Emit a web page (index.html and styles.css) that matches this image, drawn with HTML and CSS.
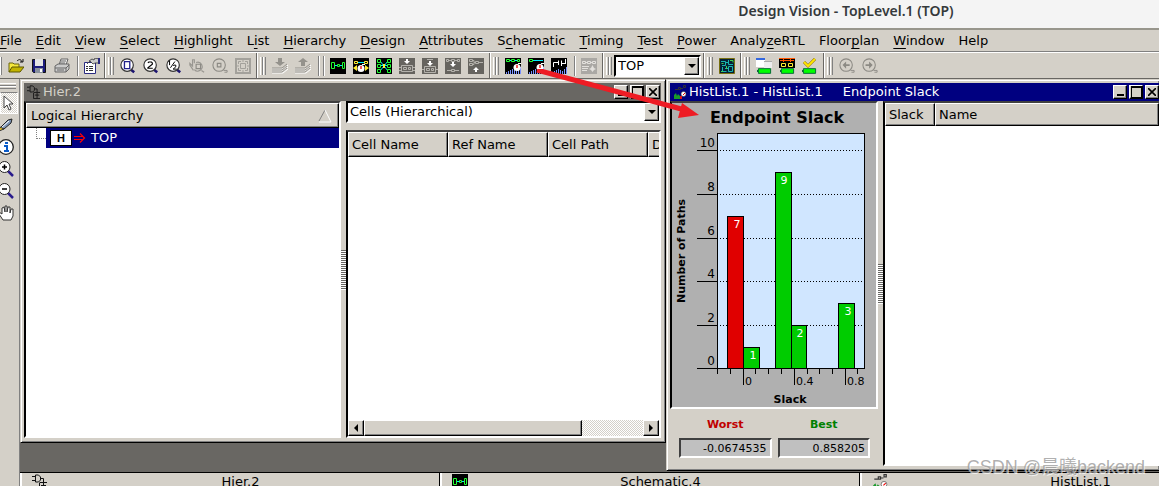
FILE: index.html
```html
<!DOCTYPE html>
<html lang="en">
<head>
<meta charset="utf-8">
<title>Design Vision - TopLevel.1 (TOP)</title>
<link rel="stylesheet" href="styles.css">
</head>
<body>
<svg class="defs" aria-hidden="true">
  <symbol id="lens" viewBox="0 0 18 18"><path d="M12 13l4 3" stroke="#1c1470" stroke-width="3"/><circle cx="8" cy="8" r="7" fill="#fff" stroke="#333" stroke-width="1.3"/></symbol>
  <symbol id="lens-off" viewBox="0 0 18 18"><path d="M13 14h4v2h-3" stroke="#8c8a84" fill="none"/><circle cx="8" cy="8" r="7" fill="none" stroke="#8c8a84" stroke-width="1.2"/></symbol>
  <symbol id="gate" viewBox="0 0 16 16"><path d="M0 2.500h3M0 6.500h3M3.500 1v7h3l2-2V3l-2-2h-3M9 4.500h2.500V8M7.500 9v6.500H15M7.500 8.500H15M9 11.500h5M11.500 9v6" fill="none" stroke="#111"/></symbol>
  <symbol id="chip" viewBox="0 0 16 16"><path fill="#000" d="M0 0h16v16H0z"/><path d="M5 7.500h2M9 7.500h3" stroke="#0ef"/><path d="M1.500 4.500h3v6h-3zM12.500 4.500h2v6h-2zM7.500 6.500h2v2h-2z" fill="none" stroke="#2f3"/></symbol>
  <symbol id="watch" viewBox="0 0 8 8"><circle cx="4" cy="4.500" r="3.500" fill="#fff"/><path d="M4 5V2" stroke="#e00" stroke-width="1.300"/><path d="M5 .500h3" stroke="#fff"/></symbol>
  <symbol id="bars" viewBox="0 0 16 7"><path d="M1.500 7V5M3.500 7V4M5.500 7V3M7.500 7V2M9.500 7V3M11.500 7V4M13.500 7V2M15.500 7V0" stroke="#7890ff"/></symbol>
  <symbol id="dark-box" viewBox="0 0 16 16"><path fill="#66645f" d="M0 0h16v16H0z"/></symbol>
  <symbol id="pill" viewBox="0 0 16 6"><path d="M1.500 .500h13v5h-13z" fill="#0f0" stroke="#063"/><path d="M0 2h1v2H0z" fill="#063"/></symbol>
  <symbol id="mini-hist" viewBox="0 0 14 14"><path d="M2 4.500h3M5.500 2.500h2v2h-2zM8 3.500h2M10.500 .500h2v2h-2z" fill="none" stroke="#333"/><path d="M1 14v-4l2-2 1 3 1-2 2 2v3z" fill="#1a9b2b"/><path d="M7 14v-3h2v3" fill="#d11"/><circle cx="10.500" cy="9" r="2.500" fill="#fff" stroke="#333" stroke-width=".5"/><path d="M10 10l2-2" stroke="#e00"/></symbol>
</svg>

<header class="titlebar"><h1>Design Vision - TopLevel.1 (TOP)</h1></header>

<nav class="menubar">
  <button><u>F</u>ile</button><button><u>E</u>dit</button><button><u>V</u>iew</button><button><u>S</u>elect</button><button><u>H</u>ighlight</button><button>L<u>i</u>st</button><button><u>H</u>ierarchy</button><button><u>D</u>esign</button><button><u>A</u>ttributes</button><button>S<u>c</u>hematic</button><button><u>T</u>iming</button><button><u>T</u>est</button><button><u>P</u>ower</button><button>Analy<u>z</u>eRTL</button><button>Floor<u>p</u>lan</button><button><u>W</u>indow</button><button>Help</button>
</nav>

<div class="toolbars">
  <div class="group group-first">
    <span class="grip"></span>
    <button class="tool" aria-label="Open"><svg viewBox="0 0 16 16"><path d="M1 14V5h4l1 1h5v3" fill="#f5e83c" stroke="#6b6410"/><path d="M1 14l3-5h12l-4 5z" fill="#c2b400" stroke="#5c5600"/><path d="M9 3c2-2 4-2 5 1M12 4h3V1" fill="none" stroke="#111"/></svg></button>
    <button class="tool" aria-label="Save"><svg viewBox="0 0 16 16"><path d="M1.500 1.500h13v13h-12l-1-1z" fill="#1c1c7c" stroke="#111"/><path d="M4 1h8v7H4z" fill="#e4e4e4"/><path d="M4 10h8v5H4z" fill="#88909c"/><path d="M9 11h2v3H9z" fill="#fff"/></svg></button>
    <button class="tool" aria-label="Print"><svg viewBox="0 0 16 16"><path d="M5 7l2-6h7l-2 6" fill="#eee" stroke="#666"/><path d="M1 8l3-2h11v5l-3 3H1z" fill="#ccc" stroke="#666"/><path d="M1 10h11l3-3M12 10v4M7 3h5M6 5h5M3 12h7" stroke="#666" fill="none"/></svg></button>
    <span class="sep"></span>
    <button class="tool" aria-label="Properties"><svg viewBox="0 0 16 16"><path d="M.500 4.500h11v11H.500z" fill="#fff" stroke="#2a2a80"/><path d="M3 6l3-3 3 3 2-1h4V1l-4-1-1 2-2-1-3 2" fill="#ccc" stroke="#333" stroke-width=".8"/><path d="M2 8.500h2M5 8.500h4M2 10.500h2M5 10.500h4M2 12.500h2M5 12.500h4" stroke="#333"/><path d="M14 0h2v6h-2z" fill="#2a2a80"/></svg></button>
  </div>
  <div class="group">
    <span class="grip"></span>
    <button class="tool" aria-label="Zoom fit"><svg viewBox="0 0 18 18"><use href="#lens"/><path d="M5 4h6v8H5z" fill="#fff" stroke="#22228c" stroke-width="1.500"/></svg></button>
    <button class="tool" aria-label="Zoom 2x"><svg viewBox="0 0 18 18"><use href="#lens"/><path d="M5.500 5.500l1-1h3l1 1v1.500l-5 4v.500h5.500" fill="none" stroke="#000" stroke-width="1.300"/></svg></button>
    <button class="tool" aria-label="Zoom half"><svg viewBox="0 0 18 18"><use href="#lens"/><path d="M3 4l1-1v5M5 11l5-7M8 9l1-1h2v2l-3 2.500h4" fill="none" stroke="#000" stroke-width="1.100"/></svg></button>
    <button class="tool" aria-label="Pan" disabled><svg viewBox="0 0 18 18"><path d="M5 14L1 8V6l3 3V2h2v4M8 5a5 5 0 1 1-2 8M14 14l3 2" fill="none" stroke="#989690" stroke-width="1.300"/><path d="M8 7h5v5H8z" fill="none" stroke="#8c8a84" stroke-width="1.300"/></svg></button>
    <button class="tool" aria-label="Zoom selection" disabled><svg viewBox="0 0 18 18"><use href="#lens-off"/><path d="M6 6h4v4H6z" fill="none" stroke="#8c8a84" stroke-width="1.300"/></svg></button>
    <button class="tool" aria-label="Full view" disabled><svg viewBox="0 0 16 16"><path d="M1 1h14v14H1z" fill="none" stroke="#a3a19b" stroke-width="2"/><path d="M3.500 6V3.500H6M10 3.500h2.500V6M3.500 10v2.500H6M10 12.500h2.500V10M5.500 5.500h5v5h-5zM8 2v2M8 12v2M2 8h2M12 8h2" fill="none" stroke="#a3a19b"/></svg></button>
  </div>
  <div class="group">
    <span class="grip"></span>
    <button class="tool" aria-label="Push" disabled><svg viewBox="0 0 16 16"><path d="M6 0h4v4h3l-5 4-5-4h3z" fill="#94928c"/><path d="M0 11h11l5-4M0 13h11l5-4M0 15h11l5-4" fill="none" stroke="#fff"/><path d="M0 10h10l5-4M0 12h10l5-4M0 14h10l5-4" fill="none" stroke="#94928c"/></svg></button>
    <button class="tool" aria-label="Pop" disabled><svg viewBox="0 0 16 16"><path d="M6 8h4V4h3L8 0 3 4h3z" fill="#94928c"/><path d="M0 11h11l5-4M0 13h11l5-4M0 15h11l5-4" fill="none" stroke="#fff"/><path d="M0 10h10l5-4M0 12h10l5-4M0 14h10l5-4" fill="none" stroke="#94928c"/></svg></button>
    <span class="sep sep-double"></span>
    <button class="tool" aria-label="Schematic"><svg viewBox="0 0 16 16"><use href="#chip"/></svg></button>
    <button class="tool" aria-label="Timing path"><svg viewBox="0 0 16 16"><path d="M0 0h16v16H0z"/><path d="M4 4.500h8" stroke="#0ef"/><path d="M1.500 3.500h3v2h-3zM11.500 3.500h3v2h-3z" fill="none" stroke="#fe3"/><path d="M4 7v6l-4-3zM12 7v6l4-3z" fill="#fe3"/><use href="#watch" x="4" y="6" width="8" height="8"/></svg></button>
    <button class="tool" aria-label="Fan view"><svg viewBox="0 0 16 16"><path d="M0 0h16v16H0z"/><path d="M4 3l4 5-4 5M12 3L8 8l4 5M4 7.500h8" fill="none" stroke="#0ef"/><path d="M1.500 1.500h3v3h-3zM1.500 6.500h3v3h-3zM1.500 11.500h3v3h-3zM11.500 1.500h3v3h-3zM11.500 6.500h3v3h-3zM11.500 11.500h3v3h-3z" fill="none" stroke="#2f3"/><path d="M7 6h2v4H7z" fill="#fe3"/></svg></button>
    <button class="tool" aria-label="Add fan-in" disabled><svg viewBox="0 0 16 16"><use href="#dark-box"/><path d="M2.500 7.500h11v6h-11zM4.500 9.500h3v2h-3zM9.500 9.500h2v2h-2zM0 9.500h2M0 12.500h2M14 9.500h2M14 12.500h2" fill="none" stroke="#b4b2ac"/><path d="M7 1h2v2h2L8 6 5 3h2z" fill="#fff"/></svg></button>
    <button class="tool" aria-label="Add fan-out" disabled><svg viewBox="0 0 16 16"><use href="#dark-box"/><path d="M5 1.500h6M2.500 8.500h11v6h-11zM4.500 10.500h3v2h-3zM9.500 10.500h2v2h-2zM0 11.500h2M14 11.500h2" fill="none" stroke="#b4b2ac"/><path d="M7 3h2v2h2L8 8 5 5h2z" fill="#fff"/></svg></button>
    <button class="tool" aria-label="Add path" disabled><svg viewBox="0 0 16 16"><use href="#dark-box"/><path d="M1.500 1.500h2v2h-2zM6.500 1.500h3v2h-3zM12.500 1.500h2v2h-2zM4 2.500h2M10 2.500h2M2 12.500h4M10 12.500h4M6.500 11.500h3v2h-3z" fill="none" stroke="#b4b2ac"/><path d="M7 4h2v2h2L8 9 5 6h2z" fill="#fff"/></svg></button>
    <button class="tool" aria-label="Remove path" disabled><svg viewBox="0 0 16 16"><use href="#dark-box"/><path d="M1.500 1.500h3v2h-3zM1.500 5.500h3v2h-3zM7.500 3.500h3v2h-3zM11 4.500h4M5 2.500h1v2h1M5 6.500h1v-2" fill="none" stroke="#b4b2ac"/><path d="M7 14h2v-2h2L8 9l-3 3h2z" fill="#fff"/></svg></button>
  </div>
  <div class="group">
    <span class="grip"></span>
    <button class="tool" aria-label="Path slack histogram"><svg viewBox="0 0 16 16"><path d="M0 0h16v16H0z"/><path d="M4 2.500h8" stroke="#0ef"/><path d="M1.500 1.500h3v2h-3zM6.500 1.500h3v2h-3zM12.500 1.500h2v2h-2z" stroke="#2f3"/><use href="#bars" y="9" width="16" height="7"/><use href="#watch" x="8" y="5" width="8" height="8"/></svg></button>
    <button class="tool" aria-label="Endpoint slack histogram"><svg viewBox="0 0 16 16"><path d="M0 0h16v16H0z"/><path d="M4 2.500h11" stroke="#0ef"/><path d="M1.500 1.500h3v2h-3z" stroke="#2f3"/><use href="#bars" y="9" width="16" height="7"/><use href="#watch" x="8" y="5" width="8" height="8"/></svg></button>
    <button class="tool" aria-label="Net capacitance histogram"><svg viewBox="0 0 16 16"><path d="M0 0h16v16H0z"/><use href="#bars" y="9" width="16" height="7"/><path d="M2.500 9V4.500h5M7.500 7V2.500M10.500 8V2.500M10.500 5.500h4M14.500 1v5" fill="none" stroke="#fff"/></svg></button>
    <span class="sep"></span>
    <button class="tool" aria-label="Path inspector" disabled><svg viewBox="0 0 16 16"><path fill="#aaa8a4" d="M0 0h16v16H0z"/><path d="M1.500 3.500h3v2h-3zM6.500 3.500h3v2h-3zM11.500 3.500h3v2h-3zM5 4.500h1M10 4.500h1M1 8.500h7M1 10.500h6M1 12.500h5" fill="none" stroke="#e2e0dc"/><path d="M11.500 7l1.500 3 2 1-2 1-1.500 2-1.500-2-2-1 2-1z" fill="#e2e0dc"/></svg></button>
  </div>
  <div class="group">
    <span class="grip"></span>
    <div class="combo combo-design"><select aria-label="Current design"><option>TOP</option></select><span class="drop"></span></div>
  </div>
  <div class="group">
    <span class="grip"></span>
    <button class="tool" aria-label="Layout view"><svg viewBox="0 0 16 16"><path d="M.500.500h15v15H.500z" fill="#052036" stroke="#776f10"/><path d="M2 3.500h4.500v4H3M9.500 2v4.500H14M9.500 8.500h4v5h-4zM3.500 9v4.500h4M7 4.500h2M6 10.500h3" fill="none" stroke="#18b5b0"/><path d="M2 13.500h2M11 2.500h3v2M2.500 5.500h2M7.500 8v3" fill="none" stroke="#3fd050"/></svg></button>
  </div>
  <div class="group">
    <span class="grip"></span>
    <button class="tool" aria-label="New report"><svg viewBox="0 0 16 16"><path d="M0 0h9v9H0z" fill="#fff"/><path d="M0 0h9v2H0z" fill="#3468e0"/><path d="M8 3h8v7H8z" fill="#eee"/><path d="M8 3.500h8" stroke="#aaa"/><use href="#pill" x="1" y="10" width="15" height="6"/></svg></button>
    <button class="tool" aria-label="Report paths"><svg viewBox="0 0 16 16"><path d="M0 0h16v10H0z"/><path d="M0 .500h16M1 2.500h14M4.500 0v4M11.500 0v4" stroke="#f50"/><path d="M2.500 5.500h4v3h-4zM9.500 5.500h4v3h-4z" fill="none" stroke="#fe3"/><use href="#pill" x="1" y="10" width="15" height="6"/></svg></button>
    <button class="tool" aria-label="Check design"><svg viewBox="0 0 16 16"><path d="M2 4l4 4 7-7" fill="none" stroke="#876c00" stroke-width="3"/><path d="M2 4l4 4 7-7" fill="none" stroke="#ffe600" stroke-width="2"/><use href="#pill" x="0" y="10" width="15" height="6"/></svg></button>
  </div>
  <div class="group group-last">
    <span class="grip"></span>
    <button class="tool" aria-label="Back" disabled><svg viewBox="0 0 18 18"><use href="#lens-off"/><path d="M4 8l4-4v3h4v2H8v3z" fill="#8c8a84"/></svg></button>
    <button class="tool" aria-label="Forward" disabled><svg viewBox="0 0 18 18"><use href="#lens-off"/><path d="M12 8L8 4v3H4v2h4v3z" fill="#8c8a84"/></svg></button>
  </div>
</div>

<div class="main">
  <aside class="palette">
    <span class="grip-h"></span>
    <button class="pick pressed" aria-label="Select"><svg viewBox="0 0 16 16"><path d="M5 1v12l3-3 2 5 2-1-2-5h4z" fill="#fff" stroke="#444"/></svg></button>
    <button class="pick" aria-label="Highlight"><svg viewBox="0 0 16 16"><path d="M2 11l8-8 4-1-1 4-7 6z" fill="#7e96b8" stroke="#222"/><path d="M3 11l8-7" stroke="#fff"/><path d="M1 14l1-4 4 2z" fill="#edc520" stroke="#333"/></svg></button>
    <button class="pick" aria-label="Info"><svg viewBox="0 0 16 16"><circle cx="8" cy="8" r="7.300" fill="#fff" stroke="#222" stroke-width="1.300"/><path d="M6 7h3v5M6 12h5" fill="none" stroke="#0a5bc8" stroke-width="2"/><path d="M7 3h3v2H7z" fill="#0a5bc8"/></svg></button>
    <button class="pick" aria-label="Zoom in"><svg viewBox="0 0 16 16"><path d="M10 10l5 5" stroke="#2a1c8c" stroke-width="2.500"/><circle cx="6.500" cy="6" r="5.500" fill="#fff" stroke="#222"/><path d="M4 6h5M6.500 3.500v5" stroke="#000" stroke-width="1.500"/></svg></button>
    <button class="pick" aria-label="Zoom out"><svg viewBox="0 0 16 16"><path d="M10 10l5 5" stroke="#2a1c8c" stroke-width="2.500"/><circle cx="6.500" cy="6" r="5.500" fill="#fff" stroke="#222"/><path d="M4 6h5" stroke="#000" stroke-width="1.500"/></svg></button>
    <button class="pick" aria-label="Pan"><svg viewBox="0 0 16 16"><path d="M5 15l-4-6V7l3 2V3l2-1 1 5V1h2v6l1-5h2v6l1-4h2v7l-2 4z" fill="#fff" stroke="#333"/></svg></button>
  </aside>

  <div class="workspace">
    <div class="desktop">
      <section class="window hier">
        <header class="caption"><svg class="cap-icon" viewBox="0 0 16 16"><use href="#gate"/></svg><h2>Hier.2</h2>
          <button class="win min" aria-label="Minimize"></button><button class="win max" aria-label="Maximize"></button><button class="win close" aria-label="Close"><svg viewBox="0 0 8 8"><path d="M0 0l8 8M8 0L0 8" stroke="#000" stroke-width="1.600"/></svg></button></header>
        <div class="split">
          <div class="sunken tree">
            <button class="head tree-head">Logical Hierarchy<svg viewBox="0 0 14 14"><path d="M7 1L1 12" stroke="#808080"/><path d="M7 1l6 12H1" fill="none" stroke="#fff"/></svg></button>
            <ul><li><span class="branch"></span><span class="node"><b>H</b><svg viewBox="0 0 12 12"><path d="M0 4.500h9M0 7.500h9M6 1.500L10.500 6 6 10.500" fill="none" stroke="#f00" stroke-width="1.200"/></svg>TOP</span></li></ul>
          </div>
          <span class="splitter"></span>
          <div class="cells">
            <div class="combo"><select aria-label="Object type"><option>Cells (Hierarchical)</option></select><span class="drop"></span></div>
            <div class="sunken list">
              <div class="clip"><table class="cell-table"><thead><tr><th>Cell Name</th><th>Ref Name</th><th>Cell Path</th><th>Dont Touch</th></tr></thead></table></div>
              <div class="scroll"><button class="arrow left" aria-label="Scroll left"></button><span class="thumb"></span><span class="track"></span><button class="arrow right" aria-label="Scroll right"></button></div>
            </div>
          </div>
        </div>
      </section>

      <section class="window hist">
        <header class="caption active"><svg class="cap-icon" viewBox="0 0 14 14"><use href="#mini-hist"/></svg><h2>HistList.1 - HistList.1 <span>Endpoint Slack</span></h2>
          <button class="win min" aria-label="Minimize"></button><button class="win max" aria-label="Maximize"></button><button class="win close" aria-label="Close"><svg viewBox="0 0 8 8"><path d="M0 0l8 8M8 0L0 8" stroke="#000" stroke-width="1.600"/></svg></button></header>
        <div class="split">
          <div class="hist-left">
            <div class="sunken chart">
              <svg viewBox="1 0 204 304" role="img" aria-label="Endpoint Slack histogram">
                <text class="chart-title" x="106" y="20">Endpoint Slack</text>
                <text class="axis-title" transform="translate(14 148) rotate(-90)">Number of Paths</text>
                <path class="plot" d="M46.500 30.500h147v235h-147z"/>
                <path class="grid" d="M49 47.500h144M49 91.500h144M49 135.500h144M49 178.500h144M49 222.500h144"/>
                <path class="tick" d="M26 47.500h20M26 91.500h20M26 135.500h20M26 178.500h20M26 222.500h20M26 265.500h20"/>
                <g class="ylab"><text x="44" y="44">10</text><text x="44" y="88">8</text><text x="44" y="132">6</text><text x="44" y="175">4</text><text x="44" y="219">2</text><text x="44" y="262">0</text></g>
                <path class="bar neg" d="M56.500 113.500h16v152h-16z"/>
                <path class="bar" d="M72.500 244.500h16v21h-16zM104.500 69.500h16v196h-16zM120.500 222.500h15v43h-15zM167.500 200.500h16v65h-16z"/>
                <g class="count"><text x="66" y="125">7</text><text x="82" y="256">1</text><text x="113" y="81">9</text><text x="129" y="234">2</text><text x="177" y="212">3</text></g>
                <path class="tick" d="M46.500 266v5M59.500 266v5M72.500 266v16M84.500 266v5M97.500 266v5M110.500 266v5M123.500 266v16M136.500 266v5M148.500 266v5M161.500 266v5M174.500 266v16M186.500 266v5"/>
                <g class="xlab"><text x="74" y="282">0</text><text x="125" y="282">0.4</text><text x="176" y="282">0.8</text></g>
                <text class="axis-title" x="119" y="300">Slack</text>
              </svg>
            </div>
            <div class="extremes">
              <label class="worst">Worst<input value="-0.0674535" readonly></label>
              <label class="best">Best<input value="0.858205" readonly></label>
            </div>
          </div>
          <span class="splitter"></span>
          <div class="sunken list paths"><table class="path-table"><thead><tr><th>Slack</th><th>Name</th></tr></thead></table></div>
        </div>
      </section>
    </div>
    <div class="tabs">
      <button class="tab"><svg viewBox="0 0 16 16"><use href="#gate"/></svg><span>Hier.2</span></button>
      <button class="tab"><svg viewBox="0 0 16 16"><use href="#chip"/></svg><span>Schematic.4</span></button>
      <button class="tab current"><svg viewBox="0 0 14 14"><use href="#mini-hist"/></svg><span>HistList.1</span></button>
    </div>
  </div>
</div>

<svg class="pointer" viewBox="0 0 164 52" aria-hidden="true"><path d="M1 1l148 40" stroke="#ee1c24" stroke-width="5"/><path d="M163 46L146 34l-4 15z" fill="#ee1c24"/></svg>
<div class="watermark">CSDN @晨曦backend</div>
</body>
</html>
```
FILE: styles.css
```css
* { box-sizing: border-box; }
body {
  margin: 0;
  height: 100vh;
  display: flex;
  flex-direction: column;
  overflow: hidden;
  position: relative;
  background: #d4d0c8;
  color: #000;
  font: 13px/16px "DejaVu Sans", sans-serif;
}
button, select, input { font: inherit; color: inherit; margin: 0; padding: 0; border: 0; background: none; border-radius: 0; }
h1, h2, ul { margin: 0; padding: 0; font: inherit; list-style: none; }
.defs { position: absolute; width: 0; height: 0; }
svg { display: block; flex: none; }

.titlebar { height: 28px; flex: none; background: #f4f4f4; padding-left: 533px; text-align: center; }
.titlebar h1 { font: 600 14px/22px "Noto Sans", sans-serif; color: #35393b; white-space: nowrap; }

.menubar { flex: none; height: 24px; display: flex; gap: 14px; border-top: 2px solid #98968c; border-bottom: 1px solid #808080; }
.menubar button { white-space: nowrap; }
.menubar u { text-underline-offset: 3px; text-decoration-thickness: 1px; text-decoration-skip-ink: none; }

.toolbars { flex: none; height: 27px; display: flex; border-top: 1px solid #fff; border-bottom: 1px solid #696763; }
.group { display: flex; align-items: center; padding: 0 2px; border-left: 1px solid #fff; border-right: 1px solid #696763; }
.group-first { padding: 0 1px 0 0; border-left: 0; }
.group-first .grip { width: 2px; }
.group-last { border-right: 0; }
.grip { width: 6px; height: 18px; margin-right: 2px; border: solid; border-width: 0 1px; border-color: #fff #808080 #808080 #fff; background: linear-gradient(90deg, #d4d0c8 0 1px, #808080 1px 2px, #fff 2px 3px, #d4d0c8 3px); }
.sep { width: 7px; height: 20px; background: linear-gradient(90deg, transparent 4px, #808080 4px 5px, #fff 5px 6px, transparent 6px); }
.sep-double { width: 12px; background: linear-gradient(90deg, transparent 4px, #808080 4px 5px, #fff 5px 6px, transparent 6px 9px, #808080 9px 10px, #fff 10px 11px, transparent 11px); }
.tool { width: 23px; height: 24px; display: grid; place-items: center; }
.tool svg { width: 16px; height: 16px; }

.combo { display: grid; background: #fff; border: 2px solid; border-color: #000 #fff #fff #000; height: 22px; }
.combo > * { grid-area: 1 / 1; min-width: 0; }
.combo select { appearance: none; width: 100%; padding-left: 2px; outline: 0; }
.combo-design { width: 87px; }
.drop { justify-self: end; width: 15px; display: grid; place-items: center; background: #d4d0c8; border: 1px solid; border-color: #fff #000 #000 #fff; box-shadow: inset -1px -1px #808080; pointer-events: none; }
.drop::before { content: ""; border: 4px solid transparent; border-top-color: #000; border-bottom: 0; }

.main { flex: 1; display: flex; min-height: 0; }
.palette { width: 20px; flex: none; border-right: 1px solid #808080; padding-top: 4px; }
.grip-h { display: block; width: 16px; height: 6px; margin-bottom: 3px; border: solid; border-width: 1px 0; border-color: #fff #808080 #808080; background: linear-gradient(#d4d0c8 0 1px, #808080 1px 2px, #fff 2px 3px, #d4d0c8 3px); }
.pick { display: flex; align-items: center; width: 18px; height: 22px; }
.pick svg { width: 16px; height: 16px; margin-left: -2px; }
.pressed { border: 1px solid; border-color: #808080 #fff #fff; background: repeating-conic-gradient(#fff 0 25%, #d4d0c8 0 50%) 0 0 / 2px 2px; }

.workspace { flex: 1; min-width: 0; display: flex; flex-direction: column; background: #696763; }
.desktop { flex: 1; min-height: 0; display: grid; grid-template-columns: 646fr 493fr; }
.window { min-width: 0; display: flex; flex-direction: column; background: #d4d0c8; border: 1px solid; border-color: #d4d0c8 #000 #000 #d4d0c8; box-shadow: inset 1px 1px #fff, inset -1px -1px #808080; }
.hier { margin-bottom: 29px; padding: 3px 4px 4px 3px; }
.hist { margin-bottom: 1px; padding: 3px 0 4px 3px; border-right: 0; }
.caption { flex: none; height: 18px; display: flex; align-items: center; gap: 2px; padding: 0 1px 0 3px; background: #696763; color: #d4d0c8; }
.caption.active { background: #000080; color: #fff; padding-right: 0; }
.caption h2 { flex: 1; white-space: nowrap; }
.caption h2 span { margin-left: 16px; }
.cap-icon { width: 14px; height: 14px; }
.win { width: 14px; height: 14px; flex: none; display: grid; place-items: center; background: #d4d0c8; border: 1px solid; border-color: #fff #000 #000 #fff; box-shadow: inset -1px -1px #808080; }
.win svg { width: 8px; height: 8px; }
.min::before { content: ""; width: 7px; height: 2px; margin-top: 6px; background: #000; }
.max::before { content: ""; width: 9px; height: 9px; border: 1px solid #000; border-top-width: 2px; }

.split { flex: 1; min-height: 0; display: flex; }
.sunken { background: #fff; border: 2px solid; border-color: #404040 #fff #fff #000; outline: 0; }
.splitter { width: 5px; flex: none; background: repeating-linear-gradient(#696763 0 1px, #fff 1px 2px) center / 5px 40px no-repeat; }
.tree { width: 317px; flex: none; }
.head, th { text-align: left; font-weight: normal; background: #d4d0c8; border: 1px solid; border-color: #fff #000 #000 #fff; box-shadow: inset -1px -1px #808080; padding: 0 4px; white-space: nowrap; }
.tree-head { width: 100%; height: 25px; display: flex; align-items: center; justify-content: space-between; padding-right: 6px; }
.tree-head svg { width: 14px; height: 14px; }
.tree li { display: flex; height: 20px; }
.branch { width: 10px; height: 11px; margin-left: 10px; border: dotted #808080; border-width: 0 0 1px 1px; }
.node { flex: 1; display: flex; align-items: center; gap: 2px; padding-left: 4px; background: #000080; color: #fff; }
.node b { width: 22px; height: 16px; border: 1px solid #000; background: #fff; color: #000; font: bold 11px/14px "Liberation Sans", sans-serif; text-align: center; }
.node svg { width: 12px; height: 12px; margin-right: 3px; }
.cells { flex: 1; min-width: 0; display: flex; flex-direction: column; gap: 7px; }
.list { flex: 1; min-width: 0; min-height: 0; display: flex; flex-direction: column; }
.clip { flex: 1; min-height: 0; overflow: hidden; }
table { border-collapse: separate; border-spacing: 0; table-layout: fixed; }
th { height: 25px; padding: 0 3px; }
.cell-table { width: 400px; }
.path-table { width: 100%; }
.path-table th { height: 23px; }
.path-table th:first-child { width: 50px; }
.scroll { display: flex; height: 16px; flex: none; }
.arrow { width: 16px; display: grid; place-items: center; }
.arrow, .thumb { background: #d4d0c8; border: 1px solid; border-color: #fff #000 #000 #fff; box-shadow: inset -1px -1px #808080; }
.thumb { flex: 219; }
.track { flex: 62; background: repeating-conic-gradient(#fff 0 25%, #d4d0c8 0 50%) 0 0 / 2px 2px; }
.arrow::before { content: ""; border: 4px solid transparent; }
.left::before { border-right-color: #000; border-left: 0; }
.right::before { border-left-color: #000; border-right: 0; }

.hist-left { width: 208px; flex: none; }
.chart { background: #b0b0b0; }
.chart svg { width: 100%; height: auto; }
.chart text { font-size: 11px; }
.chart .chart-title { font-size: 16px; font-weight: bold; text-anchor: middle; }
.chart .axis-title { font-weight: bold; text-anchor: middle; }
.chart path { stroke: #000; shape-rendering: crispEdges; }
.plot { fill: #d0e6ff; }
.grid { stroke-dasharray: 1 2; }
.ylab { text-anchor: end; }
.chart .ylab text { font-size: 12px; }
.bar { fill: #00cc00; }
.neg { fill: #e00000; }
.count { fill: #fff; text-anchor: middle; }
.extremes { display: grid; grid-template-columns: 1fr 1fr; gap: 6px; padding: 8px 8px 0 9px; font-size: 11px; font-weight: bold; text-align: center; }
.extremes label { min-width: 0; }
.extremes input { display: block; width: 100%; height: 20px; margin-top: 5px; padding-right: 3px; text-align: right; font-weight: normal; color: #000; background: #c0c0c0; border: 2px solid; border-color: #404040 #fff #fff #404040; }
.worst { color: #c00000; }
.best { color: #008000; }
.paths { border-right: 0; }

.tabs { flex: none; height: 14px; display: flex; overflow: hidden; border-top: 1px solid #000; background: #d4d0c8; }
.tab { flex: 0 0 420px; height: 20px; display: flex; align-items: flex-start; padding: 1px 6px 0 10px; border-left: 2px solid #fff; border-right: 1px solid #000; }
.tab svg { width: 16px; height: 16px; }
.tab span { flex: 1; }

.pointer { position: absolute; left: 536px; top: 69px; width: 164px; height: 52px; }
.watermark { position: absolute; right: 14px; bottom: 8px; font: 18px/22px "Liberation Sans", "Noto Sans CJK SC", sans-serif; color: rgba(150, 150, 150, .75); text-shadow: 1px 1px rgba(255, 255, 255, .7); white-space: nowrap; }
```
